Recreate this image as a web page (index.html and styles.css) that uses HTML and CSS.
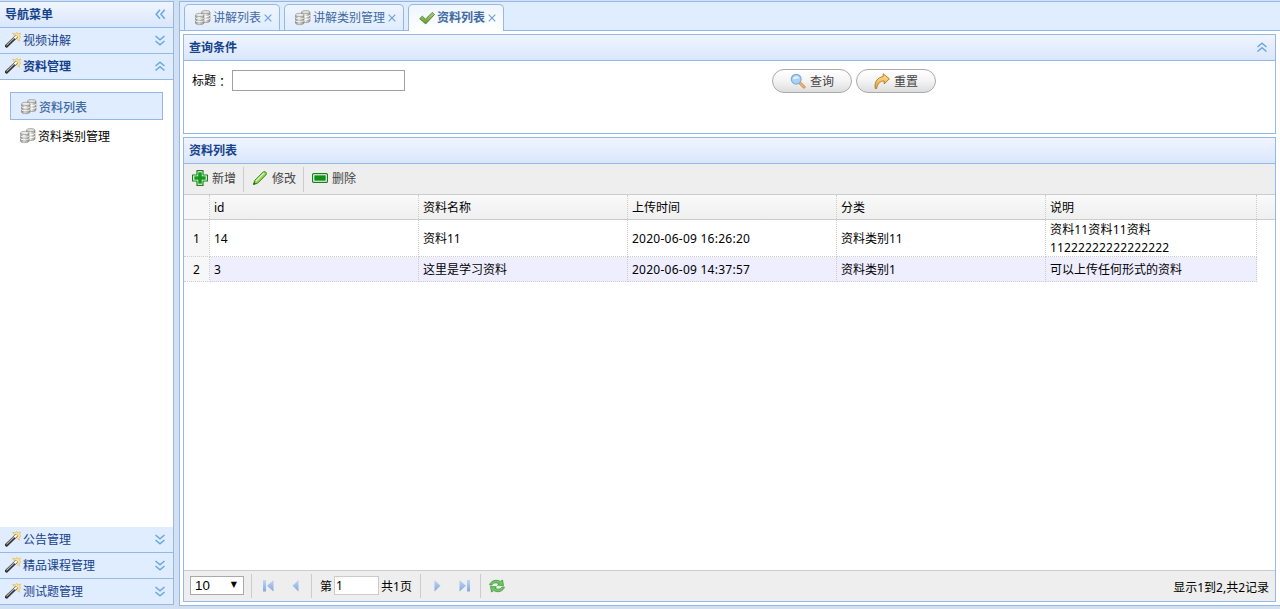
FILE: index.html
```html
<!DOCTYPE html>
<html lang="zh-CN">
<head>
    <meta charset="UTF-8">
    <title>资料列表</title>
    <link rel="stylesheet" href="styles.css">
</head>
<body>
    <svg class="sprite" aria-hidden="true">
        <defs>
            <linearGradient id="gSilver"><stop offset="0" stop-color="#8a8a86"/><stop offset=".4" stop-color="#f5f5f2"/><stop offset="1" stop-color="#8f8f8a"/></linearGradient>
            <linearGradient id="gBlue" x2="0" y2="1"><stop offset="0" stop-color="#bfd6f5"/><stop offset="1" stop-color="#86a6dc"/></linearGradient>
            <linearGradient id="gGold" x2="0" y2="1"><stop offset="0" stop-color="#ffe490"/><stop offset="1" stop-color="#e9a135"/></linearGradient>
            <linearGradient id="gGreen" x2="0" y2="1"><stop offset="0" stop-color="#b0d780"/><stop offset="1" stop-color="#5f9a31"/></linearGradient>
        </defs>
        <symbol id="db" viewBox="0 0 16 16">
            <g fill="url(#gSilver)" stroke="#85857f" stroke-width=".6">
                <path d="M6.500 2v9c0 2 8.500 2 8.500 0V2"/>
                <ellipse cx="10.750" cy="2" rx="4.250" ry="1.500" fill="#e4e4e0"/>
                <path d="M6.500 5c0 2 8.500 2 8.500 0M6.500 8c0 2 8.500 2 8.500 0" fill="none" stroke="#fff" stroke-width="1"/>
                <path d="M.5 5v8c0 2.200 8.500 2.200 8.500 0V5"/>
                <ellipse cx="4.750" cy="4.900" rx="4.250" ry="1.600" fill="#ecece8"/>
                <path d="M.5 7.700c0 2.100 8.500 2.100 8.500 0M.5 10.500c0 2.100 8.500 2.100 8.500 0" fill="none" stroke="#fff" stroke-width="1"/>
                <path d="M.5 8.600c0 2.100 8.500 2.100 8.500 0M.5 11.400c0 2.100 8.500 2.100 8.500 0" fill="none"/>
            </g>
        </symbol>
        <symbol id="wand" viewBox="0 0 16 16">
            <path d="M7.500 1.200l2.500.8L12 .3l.8 1.700 2.700-1-.8 2.500 1 2-1.500.8.3 3-2.500-2z" fill="#fbe29a" stroke="#e3bd62" stroke-width=".7"/>
            <path d="M1.500 14L10 5.800" stroke="#33322e" stroke-width="3.200" stroke-linecap="round"/>
            <path d="M1.500 13.300L9 6" stroke="#b5b5b5" stroke-width="1.100"/>
            <path d="M9.500 6.300l2.500-2.400" stroke="#77736a" stroke-width="3.200"/>
            <path d="M9.500 6.200l2.300-2.200" stroke="#fff" stroke-width="1.900"/>
        </symbol>
        <symbol id="ok" viewBox="0 0 16 16">
            <path d="M.7 8.700l2.600-2.500 3.200 3L13.200 2.500l2.300 2-8.800 9.400z" fill="url(#gGreen)" stroke="#4e792c" stroke-width=".9" stroke-linejoin="round"/>
        </symbol>
        <symbol id="search" viewBox="0 0 16 16">
            <path d="M10 10l4 4" stroke="#c98643" stroke-width="3" stroke-linecap="round"/>
            <path d="M10 10l4 4" stroke="#f3b96c" stroke-width="1.600" stroke-linecap="round"/>
            <circle cx="6.200" cy="6.200" r="4.900" fill="#a9d2f7" stroke="#86a9d6" stroke-width="1.200"/>
            <path d="M3 6c.3-3.500 6-3.500 6.500-.5C7.500 4.500 5 7 3 6z" fill="#e3f2ff"/>
        </symbol>
        <symbol id="redo" viewBox="0 0 16 16">
            <path d="M1.200 15.500C.2 8.500 4 4 9.200 3.700V.8l6.200 5-5.200 5.200V8C6.500 7.800 3.400 10.500 2.600 15.500z" fill="url(#gGold)" stroke="#aa762c" stroke-width=".9" stroke-linejoin="round"/>
        </symbol>
        <symbol id="add" viewBox="0 0 16 16">
            <path d="M5 .6h6L11 5h4.400v6H11v4.400H5V11H.6V5H5z" fill="#fff" stroke="#17801c" stroke-width="1.200" stroke-linejoin="round"/>
            <path d="M6.200 2.300h3.600v3.900h3.900v3.600H9.800v3.900H6.200V9.800H2.300V6.200h3.900z" fill="#169a1d"/>
        </symbol>
        <symbol id="edit" viewBox="0 0 16 16">
            <path d="M1.500 14.500l1.200-4L11.200 2q1.400-1 2.600.2t.2 2.600l-8.500 8.500z" fill="#8fd653" stroke="#358019" stroke-width="1" stroke-linejoin="round"/>
            <path d="M4 11L12 3" stroke="#d9f7b5" stroke-width="1.200"/>
            <path d="M1.200 14.800l.9-2.500 1.500 1.500z" fill="#24530f"/>
        </symbol>
        <symbol id="remove" viewBox="0 0 16 16">
            <rect x=".6" y="3.600" width="14.800" height="8.800" rx="1" fill="#fff" stroke="#17801c" stroke-width="1.200"/>
            <path d="M2.300 5.300h11.400v5.400H2.300z" fill="#0f8f16"/>
        </symbol>
        <symbol id="down" viewBox="0 0 16 16">
            <path d="M3.500 3L8 6.800 12.500 3M3.500 8L8 11.800 12.500 8" fill="none" stroke="#67a8e2" stroke-width="1.500"/>
        </symbol>
        <symbol id="up" viewBox="0 0 16 16">
            <path d="M3.500 7L8 3.200 12.500 7M3.500 11.500L8 7.700l4.500 3.800" fill="none" stroke="#67a8e2" stroke-width="1.500"/>
        </symbol>
        <symbol id="left" viewBox="0 0 16 16">
            <path d="M8 2.800L4.200 7.300 8 11.800M12.700 2.800L8.900 7.300l3.800 4.500" fill="none" stroke="#67a8e2" stroke-width="1.500"/>
        </symbol>
        <symbol id="prev" viewBox="0 0 16 16">
            <path d="M10.500 2v11.500l-6-5.700z" fill="url(#gBlue)"/>
        </symbol>
        <symbol id="first" viewBox="0 0 16 16">
            <path d="M3 2h3v11.500H3zM13.500 2v11.500L7 7.700z" fill="url(#gBlue)"/>
        </symbol>
        <symbol id="reload" viewBox="0 0 16 16">
            <g fill="#72c566" stroke="#3f9a3a" stroke-width=".8" stroke-linejoin="round">
                <path d="M.6 7C1.500 3 7 .8 11.300 3.400L13.500 2l1 5.500-6-.3 1.700-1.400C7 4.200 4 4.700 3 7z"/>
                <path d="M15.400 9c-.9 4-6.400 6.200-10.700 3.600L2.500 14l-1-5.500 6 .3-1.700 1.400C9 11.800 12 11.300 13 9z"/>
            </g>
        </symbol>
    </svg>

    <div class="layout">
        <div class="west">
            <div class="west-title">导航菜单<svg class="tool"><use href="#left"/></svg></div>
            <div class="acc"><svg class="icon"><use href="#wand"/></svg>视频讲解<svg class="tool"><use href="#down"/></svg></div>
            <div class="acc active"><svg class="icon"><use href="#wand"/></svg>资料管理<svg class="tool"><use href="#up"/></svg></div>
            <div class="acc-body">
                <div class="nav-item selected"><svg class="icon"><use href="#db"/></svg>资料列表</div>
                <div class="nav-item"><svg class="icon"><use href="#db"/></svg>资料类别管理</div>
            </div>
            <div class="acc"><svg class="icon"><use href="#wand"/></svg>公告管理<svg class="tool"><use href="#down"/></svg></div>
            <div class="acc"><svg class="icon"><use href="#wand"/></svg>精品课程管理<svg class="tool"><use href="#down"/></svg></div>
            <div class="acc"><svg class="icon"><use href="#wand"/></svg>测试题管理<svg class="tool"><use href="#down"/></svg></div>
        </div>

        <div class="center">
            <div class="tabs">
                <div class="tab"><svg class="icon"><use href="#db"/></svg>讲解列表<svg class="close" viewBox="0 0 8 8"><path d="M.7.7l6.600 6.600M7.300.7L.7 7.300"/></svg></div>
                <div class="tab wide"><svg class="icon"><use href="#db"/></svg>讲解类别管理<svg class="close" viewBox="0 0 8 8"><path d="M.7.7l6.600 6.600M7.300.7L.7 7.300"/></svg></div>
                <div class="tab current"><svg class="icon"><use href="#ok"/></svg>资料列表<svg class="close" viewBox="0 0 8 8"><path d="M.7.7l6.600 6.600M7.300.7L.7 7.300"/></svg></div>
            </div>

            <div class="panel query">
                <div class="panel-title">查询条件<svg class="tool"><use href="#up"/></svg></div>
                <form class="query-form">
                    <label for="title">标题<span class="colon" lang="zh-TW">：</span></label>
                    <input type="text" id="title">
                    <div class="buttons">
                        <button type="button"><svg class="icon"><use href="#search"/></svg>查询</button>
                        <button type="button"><svg class="icon"><use href="#redo"/></svg>重置</button>
                    </div>
                </form>
            </div>

            <div class="panel list">
                <div class="panel-title">资料列表</div>
                <div class="toolbar">
                    <a class="add"><svg class="icon"><use href="#add"/></svg>新增</a>
                    <a class="edit"><svg class="icon"><use href="#edit"/></svg>修改</a>
                    <a class="remove"><svg class="icon"><use href="#remove"/></svg>删除</a>
                </div>
                <div class="grid">
                    <div class="row head">
                        <div class="rownum"></div>
                        <div>id</div>
                        <div>资料名称</div>
                        <div>上传时间</div>
                        <div>分类</div>
                        <div>说明</div>
                    </div>
                    <div class="row tall">
                        <div class="rownum">1</div>
                        <div>14</div>
                        <div>资料11</div>
                        <div class="num">2020-06-09 16:26:20</div>
                        <div>资料类别11</div>
                        <div class="note">资料11资料11资料<br>11222222222222222</div>
                    </div>
                    <div class="row alt">
                        <div class="rownum">2</div>
                        <div>3</div>
                        <div>这里是学习资料</div>
                        <div class="num">2020-06-09 14:37:57</div>
                        <div>资料类别1</div>
                        <div>可以上传任何形式的资料</div>
                    </div>
                </div>
                <div class="pager">
                    <div class="page-size">10<span>▼</span></div>
                    <div class="group nav-first">
                        <svg class="icon"><use href="#first"/></svg>
                        <svg class="icon"><use href="#prev"/></svg>
                    </div>
                    <div class="group page-num">第<input type="text" value="1">共1页</div>
                    <div class="group nav-last">
                        <svg class="icon flip"><use href="#prev"/></svg>
                        <svg class="icon flip"><use href="#first"/></svg>
                    </div>
                    <div class="group refresh"><svg class="icon"><use href="#reload"/></svg></div>
                    <div class="info">显示1到2,共2记录</div>
                </div>
            </div>
        </div>
    </div>
</body>
</html>
```
FILE: styles.css
```css
* {
    box-sizing: border-box;
}

body {
    margin: 0;
    height: 609px;
    overflow: hidden;
    background: #d2e0f2;
    color: #000;
    font: 12px/18px "Noto Sans", "Noto Sans CJK SC", sans-serif;
}

/* kept rendered at zero size, so that the gradients still resolve */
.sprite {
    display: block;
    width: 0;
    height: 0;
}

.icon,
.tool {
    width: 16px;
    height: 16px;
    flex: none;
}

.tool {
    margin-left: auto;
}

.layout {
    display: flex;
    gap: 5px;
    height: 606px;
    padding-top: 1px;
}

/* left menu */
.west {
    display: flex;
    flex-direction: column;
    width: 174px;
    height: 604px;
    border: solid #95b8e7;
    border-width: 1px 1px 1px 0;
    background: #fff;
}

.west-title,
.panel-title {
    display: flex;
    align-items: center;
    height: 26px;
    padding: 0 5px;
    border-bottom: 1px solid #95b8e7;
    background: linear-gradient(#f0f5ff 0, #e4edfe 55%, #d9e6fb 100%);
    color: #15428b;
    font-weight: bold;
    flex: none;
}

.acc {
    display: flex;
    align-items: center;
    height: 26px;
    padding: 0 5px;
    border-bottom: 1px solid #95b8e7;
    background: #e0ecff;
    color: #15428b;
    gap: 2px;
    flex: none;
}

.acc .icon {
    margin-top: -1px;
}

.acc:last-child {
    border-bottom: 0;
    height: 25px;
}

.acc.active {
    font-weight: bold;
}

.acc-body {
    flex: 1;
    padding: 12px 10px;
}

.nav-item {
    display: flex;
    align-items: center;
    gap: 2px;
    height: 28px;
    margin-bottom: 2px;
    padding: 2px 0 0 10px;
}

.nav-item .icon {
    margin-top: -2px;
}

.nav-item.selected {
    padding-top: 3px;
    border: 1px solid #95b8e7;
    background: #e0ecff;
    color: #416aa3;
    font-weight: 500;
}

/* tabs */
.center {
    display: flex;
    flex-direction: column;
    flex: 1;
    border: solid #95b8e7;
    border-width: 1px 0 1px 1px;
    background: #fff;
}

.tabs {
    display: flex;
    align-items: flex-end;
    gap: 4px;
    height: 29px;
    padding-left: 4px;
    border-bottom: 1px solid #95b8e7;
    background: #e0ecff;
    flex: none;
}

.tab {
    display: flex;
    align-items: center;
    width: 96px;
    height: 26px;
    padding-left: 10px;
    gap: 2px;
    border: 1px solid #95b8e7;
    border-bottom: 0;
    border-radius: 5px 5px 0 0;
    background: linear-gradient(#eff5ff, #e0ecff);
    color: #416aa3;
}

.tab.wide {
    width: 120px;
}

.tab.current {
    height: 27px;
    margin-bottom: -1px;
    background: linear-gradient(#eff5ff, #fff);
    font-weight: bold;
}

.close {
    width: 8px;
    height: 8px;
    margin-left: 1px;
    fill: none;
    stroke: #6f9fd8;
    stroke-width: 1.2;
}

/* panels */
.panel {
    display: flex;
    flex-direction: column;
    margin: 3px 4px 0 3px;
    border: 1px solid #95b8e7;
}

.query {
    height: 100px;
    flex: none;
}

.query-form {
    display: flex;
    padding: 8px;
}

.query-form label {
    display: flex;
    width: 40px;
    line-height: 23px;
}

.colon {
    padding-top: 1px;
    font-family: "Noto Sans CJK TC", sans-serif;
}

.query-form input {
    width: 173px;
    height: 21px;
    margin-top: 1px;
    border: 1px solid #a0a0a0;
}

.buttons {
    display: flex;
    gap: 4px;
    margin-left: 367px;
}

.buttons button {
    display: flex;
    align-items: center;
    gap: 4px;
    width: 80px;
    height: 24px;
    padding: 2px 0 0 17px;
    border: 1px solid #aaa;
    border-radius: 12px;
    background: linear-gradient(#fff, #f4f4f4 50%, #ddd);
    color: #444;
    font: inherit;
}

.buttons .icon {
    margin-top: -2px;
}

/* data grid */
.list {
    flex: 1;
    margin-bottom: 3px;
}

.toolbar {
    display: flex;
    align-items: center;
    height: 31px;
    border-bottom: 1px solid #ccc;
    background: #eee;
    color: #444;
    flex: none;
}

.toolbar a {
    display: flex;
    align-items: center;
    gap: 4px;
    width: 60px;
    height: 25px;
    padding-left: 8px;
    border-right: 1px solid #ccc;
}

.toolbar .icon {
    margin-top: -2px;
}

.toolbar .remove {
    border-right: 0;
}

.grid {
    flex: 1;
}

.row {
    display: grid;
    grid-template-columns: 26px repeat(4, 209px) 211px;
    height: 25px;
    width: 1073px;
}

.row > div {
    display: flex;
    align-items: center;
    padding: 2px 0 0 4px;
    border: dotted #ccc;
    border-width: 0 1px 1px 0;
}

.row.head {
    width: auto;
    border-bottom: 1px solid #ccc;
    background: linear-gradient(#fafafa, #efefef);
}

.row.head > div {
    border-bottom: 0;
}

.row.tall {
    height: 37px;
    grid-template-rows: 37px;
}

.row.tall > div {
    padding-top: 1px;
}

.row > .note {
    display: block;
}

.row.alt {
    background: #eeeeff;
}

.row > .rownum {
    justify-content: center;
    padding-left: 0;
    background: #f7f7f7;
}

.num {
    letter-spacing: 0.25px;
}

.note {
    letter-spacing: 0.15px;
}

/* paging bar */
.pager {
    display: flex;
    align-items: center;
    height: 31px;
    padding: 0 6px;
    border-top: 1px solid #ccc;
    background: #eee;
    flex: none;
}

.page-size {
    display: flex;
    justify-content: space-between;
    width: 54px;
    height: 19px;
    margin: 0 7px 2px 0;
    padding: 0 6px 0 4px;
    border: 1px solid #a9a9a9;
    background: #fff;
    font: 13.3px/18px "Liberation Sans", Arial, sans-serif;
}

.page-size span {
    font: 8px/16px "DejaVu Sans", sans-serif;
}

.group {
    display: flex;
    align-items: center;
    height: 24px;
    border-left: 1px solid #ccc;
}

.nav-first,
.nav-last {
    gap: 12px;
    width: 60px;
    padding-left: 8px;
}

.page-num {
    width: 109px;
    padding: 2px 0 0 8px;
}

.page-num input {
    width: 45px;
    height: 19px;
    margin: -4px 2px 0 2px;
    padding: 0 1px;
    border: 1px solid #ccc;
    font: inherit;
}

.flip {
    transform: scaleX(-1);
}

.refresh {
    padding-left: 8px;
}

.info {
    margin-left: auto;
    padding-top: 3px;
}
```
